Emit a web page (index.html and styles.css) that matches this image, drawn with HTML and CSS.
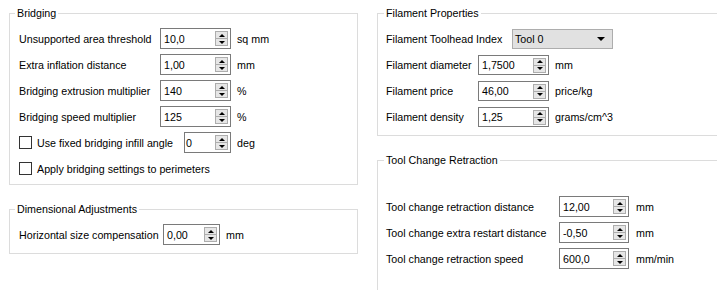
FILE: index.html
```html
<!DOCTYPE html>
<html lang="en">
<head>
    <meta charset="UTF-8">
    <title>Print settings</title>
    <link rel="stylesheet" href="styles.css">
</head>
<body>
    <div class="page">
        <div class="col col-left">
            <fieldset class="group bridging">
                <legend>Bridging</legend>
                <div class="rows">
                    <div class="row">
                        <span class="lbl">Unsupported area threshold</span>
                        <div class="spin"><span class="val">10,0</span><span class="arrows"><i class="up"></i><i class="down"></i></span></div>
                        <span class="unit">sq mm</span>
                    </div>
                    <div class="row">
                        <span class="lbl">Extra inflation distance</span>
                        <div class="spin"><span class="val">1,00</span><span class="arrows"><i class="up"></i><i class="down"></i></span></div>
                        <span class="unit">mm</span>
                    </div>
                    <div class="row">
                        <span class="lbl">Bridging extrusion multiplier</span>
                        <div class="spin"><span class="val">140</span><span class="arrows"><i class="up"></i><i class="down"></i></span></div>
                        <span class="unit">%</span>
                    </div>
                    <div class="row">
                        <span class="lbl">Bridging speed multiplier</span>
                        <div class="spin"><span class="val">125</span><span class="arrows"><i class="up"></i><i class="down"></i></span></div>
                        <span class="unit">%</span>
                    </div>
                    <div class="row">
                        <span class="check"></span>
                        <span class="lbl check-lbl">Use fixed bridging infill angle</span>
                        <div class="spin spin-small"><span class="val">0</span><span class="arrows"><i class="up"></i><i class="down"></i></span></div>
                        <span class="unit">deg</span>
                    </div>
                    <div class="row">
                        <span class="check"></span>
                        <span class="check-text">Apply bridging settings to perimeters</span>
                    </div>
                </div>
            </fieldset>

            <fieldset class="group dimensional">
                <legend>Dimensional Adjustments</legend>
                <div class="rows">
                    <div class="row">
                        <span class="lbl">Horizontal size compensation</span>
                        <div class="spin spin-mid"><span class="val">0,00</span><span class="arrows"><i class="up"></i><i class="down"></i></span></div>
                        <span class="unit">mm</span>
                    </div>
                </div>
            </fieldset>
        </div>

        <div class="col col-right">
            <fieldset class="group filament">
                <legend>Filament Properties</legend>
                <div class="rows">
                    <div class="row">
                        <span class="lbl lbl-combo">Filament Toolhead Index</span>
                        <div class="combo"><span class="val">Tool 0</span><i class="caret"></i></div>
                    </div>
                    <div class="row">
                        <span class="lbl">Filament diameter</span>
                        <div class="spin"><span class="val">1,7500</span><span class="arrows"><i class="up"></i><i class="down"></i></span></div>
                        <span class="unit">mm</span>
                    </div>
                    <div class="row">
                        <span class="lbl">Filament price</span>
                        <div class="spin"><span class="val">46,00</span><span class="arrows"><i class="up"></i><i class="down"></i></span></div>
                        <span class="unit">price/kg</span>
                    </div>
                    <div class="row">
                        <span class="lbl">Filament density</span>
                        <div class="spin"><span class="val">1,25</span><span class="arrows"><i class="up"></i><i class="down"></i></span></div>
                        <span class="unit">grams/cm^3</span>
                    </div>
                </div>
            </fieldset>

            <fieldset class="group toolchange">
                <legend>Tool Change Retraction</legend>
                <div class="rows">
                    <div class="row">
                        <span class="lbl">Tool change retraction distance</span>
                        <div class="spin"><span class="val">12,00</span><span class="arrows"><i class="up"></i><i class="down"></i></span></div>
                        <span class="unit">mm</span>
                    </div>
                    <div class="row">
                        <span class="lbl">Tool change extra restart distance</span>
                        <div class="spin"><span class="val">-0,50</span><span class="arrows"><i class="up"></i><i class="down"></i></span></div>
                        <span class="unit">mm</span>
                    </div>
                    <div class="row">
                        <span class="lbl">Tool change retraction speed</span>
                        <div class="spin"><span class="val">600,0</span><span class="arrows"><i class="up"></i><i class="down"></i></span></div>
                        <span class="unit">mm/min</span>
                    </div>
                </div>
            </fieldset>
        </div>
    </div>
</body>
</html>
```

FILE: styles.css
```css
* {
    margin: 0;
    padding: 0;
    box-sizing: border-box;
}

html, body {
    overflow: hidden;
    background: #ffffff;
}

body {
    font-family: "Liberation Sans", Arial, sans-serif;
    font-size: 10.7px;
    color: #000;
}

.page {
    display: flex;
    gap: 19px;
    padding: 7px 0 0 9px;
}

.col {
    display: flex;
    flex-direction: column;
    gap: 18px;
}

.col-left {
    width: 349px;
    flex-shrink: 0;
}

.col-right {
    width: 360px;
    flex-shrink: 0;
}

/* group boxes */
.group {
    border: 1px solid #dcdcdc;
    min-width: 0;
    padding: 8px 8px 5px 9px;
}

.group legend {
    padding: 0 2px;
    margin-left: -4px;
    line-height: 13px;
    height: 13px;
}

.col-right .group {
    padding-left: 8px;
}

.col-right .group legend {
    margin-left: -2px;
}

.dimensional {
    padding-bottom: 8px;
}

.filament {
    padding-top: 9px;
    padding-bottom: 8px;
}

.toolchange {
    padding-top: 29px;
    padding-bottom: 40px;
}

.rows {
    display: flex;
    flex-direction: column;
    gap: 5px;
}

.filament .rows {
    gap: 6px;
}

.row {
    display: flex;
    align-items: center;
    height: 21px;
}

.filament .row {
    height: 20px;
}

.lbl {
    width: 141px;
    flex-shrink: 0;
    white-space: nowrap;
}

.dimensional .lbl {
    width: 144px;
}

.filament .lbl {
    width: 92px;
}

.filament .lbl-combo {
    width: 126px;
}

.toolchange .lbl {
    width: 173px;
}

.unit {
    margin-left: 6px;
    white-space: nowrap;
}

.toolchange .unit {
    margin-left: 7px;
}

/* spin boxes */
.spin {
    display: flex;
    align-items: center;
    justify-content: space-between;
    width: 71px;
    height: 100%;
    border: 1px solid #7a7a7a;
    background: #fff;
    padding-left: 3px;
    padding-right: 2px;
}

.spin-small {
    width: 47px;
    padding-left: 1px;
}

.spin-mid {
    width: 57px;
}

.toolchange .spin {
    width: 70px;
}

.arrows {
    display: flex;
    flex-direction: column;
    width: 13px;
    height: 15px;
    border: 1px solid #adadad;
    background: #e6e6e6;
}

.arrows i {
    flex: 1;
    display: flex;
    align-items: center;
    justify-content: center;
}

.arrows .up {
    border-bottom: 1px solid #adadad;
}

.arrows i::after {
    content: "";
    border-left: 3px solid transparent;
    border-right: 3px solid transparent;
}

.arrows .up::after {
    border-bottom: 3px solid #000;
}

.arrows .down::after {
    border-top: 3px solid #000;
}

/* check boxes */
.check {
    width: 13px;
    height: 13px;
    border: 1px solid #333;
    background: #fff;
    margin-right: 5px;
    flex-shrink: 0;
}

.check-lbl {
    width: 147px;
}

.check-text {
    white-space: nowrap;
}

/* combo */
.combo {
    display: flex;
    align-items: center;
    justify-content: space-between;
    width: 101px;
    height: 100%;
    border: 1px solid #adadad;
    background: #e1e1e1;
    padding: 0 7px 0 2px;
}

.caret {
    border-left: 4px solid transparent;
    border-right: 4px solid transparent;
    border-top: 4px solid #000;
}
```
